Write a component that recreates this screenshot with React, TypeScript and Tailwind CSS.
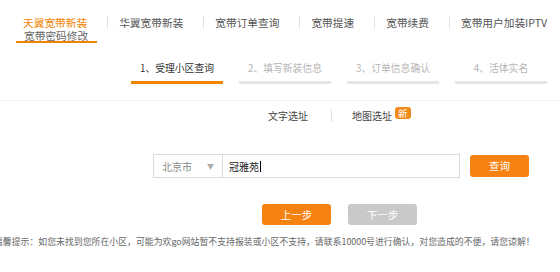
const NAV = ["华翼宽带新装", "宽带订单查询", "宽带提速", "宽带续费", "宽带用户加装IPTV"];

const STEPS = ["1、受理小区查询", "2、填写新装信息", "3、订单信息确认", "4、活体实名"];

export default function App() {
  return (
    <div
      className="relative w-[560px] h-[272px] overflow-hidden bg-white text-[#555]"
      style={{ fontFamily: '"Microsoft YaHei", "Noto Sans CJK SC", sans-serif' }}
    >
      {/* 顶部导航 */}
      <div className="flex items-center pt-[16px] pl-[23px] text-[10.7px] leading-[12px]">
        <span className="text-[#f08300] whitespace-nowrap">天翼宽带新装</span>
        {NAV.map((n) => (
          <div key={n} className="flex items-center">
            <span className="ml-[20px] mr-[11px] h-[13px] w-px bg-[#e2e2e2]" />
            <span className="whitespace-nowrap">{n}</span>
          </div>
        ))}
      </div>
      <div className="pl-[16px] pt-px">
        <div className="w-[81px] border-b-2 border-[#f08300] pl-[8px] text-[10.7px] leading-[11px] text-[#666]">
          宽带密码修改
        </div>
      </div>

      {/* 步骤 */}
      <div className="mt-[19px] flex gap-[16px] pl-[131px]">
        {STEPS.map((s, i) => (
          <div key={s} className="w-[92px] flex flex-col items-center">
            <span
              className={`whitespace-nowrap text-[9.8px] leading-[12px] ${
                i === 0 ? "text-[#333]" : "text-[#b5b5b5]"
              }`}
            >
              {s}
            </span>
            <div
              className={`mt-[7px] h-[3px] w-full ${i === 0 ? "bg-[#f08300]" : "bg-[#e6e6e6]"}`}
            />
          </div>
        ))}
      </div>

      <div className="mt-[16px] border-b border-dotted border-[#eaeaea]" />

      {/* 选址方式 */}
      <div className="mt-[6px] flex items-end pl-[268px] text-[10px] leading-[12px] text-[#444]">
        <span>文字选址</span>
        <span className="ml-[23px] mr-[20px] h-[13px] w-px bg-[#e2e2e2]" />
        <span>地图选址</span>
        <span className="mb-[3px] ml-[3px] rounded-[3px] bg-[#f28a1a] px-[3px] text-[9.5px] leading-[12px] text-white">
          新
        </span>
      </div>

      {/* 搜索 */}
      <div className="mt-[32px] flex items-center pl-[153px] text-[10px]">
        <div className="flex h-[24px] w-[70px] items-center justify-between border border-[#dcdcdc] pl-[8px] pr-[8px] text-[#888]">
          <span>北京市</span>
          <span className="text-[7px] text-[#aaa]">▼</span>
        </div>
        <div className="flex h-[24px] w-[237px] items-center border border-l-0 border-[#dcdcdc] pl-[6px] text-[#222]">
          冠雅苑<span className="ml-px h-[11px] w-px bg-black" />
        </div>
        <button className="ml-[10px] h-[22px] w-[59px] rounded-[3px] bg-[#f68212] text-[10.5px] text-white">
          查询
        </button>
      </div>

      {/* 上一步 / 下一步 */}
      <div className="mt-[26px] flex gap-[17px] pl-[262px] text-[10.5px]">
        <button className="h-[21px] w-[69px] rounded-[3px] bg-[#f68212] text-white">上一步</button>
        <button className="h-[21px] w-[69px] rounded-[3px] bg-[#c9c9c9] text-white">下一步</button>
      </div>

      <p className="mt-[11px] -ml-[6px] whitespace-nowrap text-[8.9px] leading-[12px] text-[#666]">
        温馨提示：如您未找到您所在小区，可能为欢go网站暂不支持报装或小区不支持，请联系10000号进行确认，对您造成的不便，请您谅解！
      </p>
    </div>
  );
}
